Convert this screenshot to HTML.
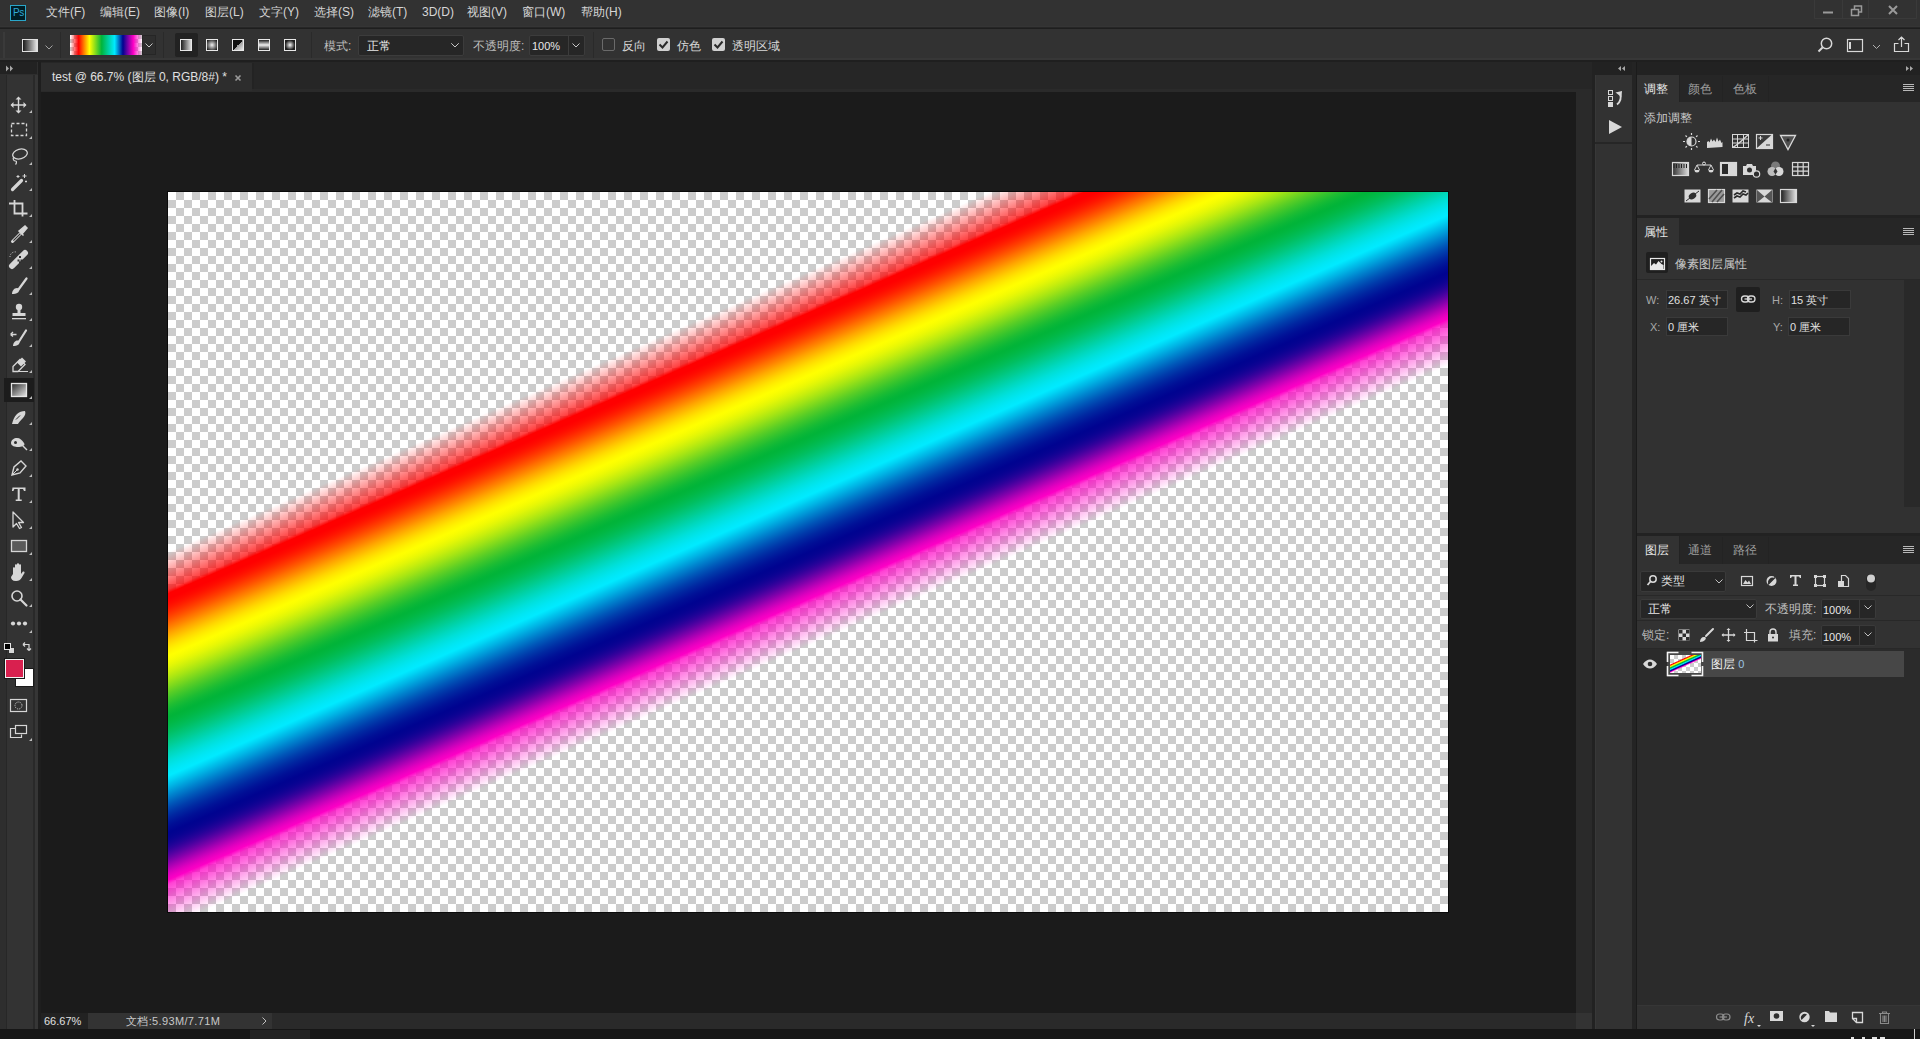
<!DOCTYPE html>
<html><head><meta charset="utf-8">
<style>
*{margin:0;padding:0;box-sizing:border-box}
html,body{width:1920px;height:1039px;overflow:hidden;background:#1b1b1b;font-family:"Liberation Sans",sans-serif;color:#d6d6d6}
.a{position:absolute}
.t{position:absolute;white-space:nowrap;font-size:12px;line-height:14px}
svg.i{position:absolute;overflow:visible}
.chk{position:absolute;width:13px;height:13px;border-radius:2px}
#thumbg,#cv{background:/*G*/linear-gradient(156.34deg,rgba(255,0,0,0.000) 327.91px,rgba(255,0,0,0.000) 329.74px,rgba(255,0,0,0.020) 330.66px,rgba(255,0,0,0.079) 333.40px,rgba(255,0,0,0.138) 336.15px,rgba(255,0,0,0.197) 338.90px,rgba(255,0,0,0.257) 341.65px,rgba(255,0,0,0.316) 344.39px,rgba(255,0,0,0.375) 347.14px,rgba(255,0,0,0.434) 349.89px,rgba(255,0,0,0.493) 352.64px,rgba(255,0,0,0.553) 355.39px,rgba(255,0,0,0.612) 358.13px,rgba(255,0,0,0.671) 360.88px,rgba(255,0,0,0.730) 363.63px,rgba(255,0,0,0.740) 364.09px,rgba(255,0,0,0.902) 366.38px,rgba(255,0,0,1.000) 367.75px,rgba(255,0,0,1.000) 369.13px,rgba(255,0,0,1.000) 371.87px,rgba(255,0,0,1.000) 372.79px,rgba(255,4,0,1.000) 374.62px,rgba(255,11,0,1.000) 377.37px,rgba(255,21,0,1.000) 380.12px,rgba(255,33,0,1.000) 382.86px,rgba(255,47,0,1.000) 385.61px,rgba(255,62,0,1.000) 388.36px,rgba(255,78,0,1.000) 391.11px,rgba(255,95,0,1.000) 393.86px,rgba(255,113,0,1.000) 396.60px,rgba(255,130,0,1.000) 399.35px,rgba(255,148,0,1.000) 402.10px,rgba(255,166,0,1.000) 404.85px,rgba(255,182,0,1.000) 407.59px,rgba(255,198,0,1.000) 410.34px,rgba(255,213,0,1.000) 413.09px,rgba(255,226,0,1.000) 415.84px,rgba(255,237,0,1.000) 418.59px,rgba(255,246,0,1.000) 421.33px,rgba(255,253,0,1.000) 424.08px,rgba(255,255,0,1.000) 425.00px,rgba(252,254,1,1.000) 426.83px,rgba(245,252,2,1.000) 429.58px,rgba(236,249,4,1.000) 432.33px,rgba(225,246,7,1.000) 435.07px,rgba(212,242,10,1.000) 437.82px,rgba(199,238,13,1.000) 440.57px,rgba(184,234,16,1.000) 443.32px,rgba(169,230,19,1.000) 446.06px,rgba(153,225,23,1.000) 448.81px,rgba(136,220,27,1.000) 451.56px,rgba(120,215,30,1.000) 454.31px,rgba(103,210,34,1.000) 457.06px,rgba(87,205,38,1.000) 459.80px,rgba(72,201,41,1.000) 462.55px,rgba(57,197,44,1.000) 465.30px,rgba(44,193,47,1.000) 468.05px,rgba(31,189,50,1.000) 470.79px,rgba(20,186,53,1.000) 473.54px,rgba(11,183,55,1.000) 476.29px,rgba(4,181,56,1.000) 479.04px,rgba(1,180,57,1.000) 480.87px,rgba(1,180,58,1.000) 481.79px,rgba(1,182,63,1.000) 484.53px,rgba(1,184,70,1.000) 487.28px,rgba(1,186,79,1.000) 490.03px,rgba(1,189,88,1.000) 492.78px,rgba(1,191,99,1.000) 495.53px,rgba(1,195,111,1.000) 498.27px,rgba(1,198,123,1.000) 501.02px,rgba(1,202,136,1.000) 503.77px,rgba(1,205,149,1.000) 506.52px,rgba(0,209,163,1.000) 509.26px,rgba(0,212,176,1.000) 512.01px,rgba(0,216,189,1.000) 514.76px,rgba(0,219,201,1.000) 517.51px,rgba(0,223,213,1.000) 520.26px,rgba(0,225,224,1.000) 523.00px,rgba(0,228,233,1.000) 525.75px,rgba(0,230,242,1.000) 528.50px,rgba(0,232,249,1.000) 531.25px,rgba(0,234,254,1.000) 533.99px,rgba(0,234,255,1.000) 534.91px,rgba(0,225,251,1.000) 536.74px,rgba(0,211,244,1.000) 539.49px,rgba(0,195,236,1.000) 542.24px,rgba(0,180,229,1.000) 544.99px,rgba(0,164,221,1.000) 547.73px,rgba(0,148,214,1.000) 550.48px,rgba(0,132,206,1.000) 553.23px,rgba(0,117,199,1.000) 555.98px,rgba(0,102,191,1.000) 558.73px,rgba(0,87,185,1.000) 561.47px,rgba(0,74,178,1.000) 564.22px,rgba(0,61,172,1.000) 566.97px,rgba(0,50,166,1.000) 569.72px,rgba(0,39,161,1.000) 572.46px,rgba(0,30,157,1.000) 575.21px,rgba(0,21,153,1.000) 577.96px,rgba(0,14,149,1.000) 580.71px,rgba(0,9,147,1.000) 583.46px,rgba(0,4,145,1.000) 586.20px,rgba(0,3,144,1.000) 587.12px,rgba(2,3,144,1.000) 588.95px,rgba(6,3,145,1.000) 591.70px,rgba(13,3,147,1.000) 594.45px,rgba(23,3,149,1.000) 597.19px,rgba(35,3,152,1.000) 599.94px,rgba(51,2,155,1.000) 602.69px,rgba(69,2,159,1.000) 605.44px,rgba(89,2,163,1.000) 608.19px,rgba(111,2,167,1.000) 610.93px,rgba(134,1,172,1.000) 613.68px,rgba(158,1,177,1.000) 616.43px,rgba(181,1,182,1.000) 619.18px,rgba(203,1,187,1.000) 621.93px,rgba(224,0,191,1.000) 624.67px,rgba(240,0,195,1.000) 627.42px,rgba(252,0,197,1.000) 630.17px,rgba(255,0,198,0.942) 631.08px,rgba(255,0,198,0.827) 632.92px,rgba(255,0,198,0.740) 634.29px,rgba(255,0,198,0.714) 635.66px,rgba(255,0,198,0.661) 638.41px,rgba(255,0,198,0.608) 641.16px,rgba(255,0,198,0.555) 643.91px,rgba(255,0,198,0.502) 646.66px,rgba(255,0,198,0.449) 649.40px,rgba(255,0,198,0.396) 652.15px,rgba(255,0,198,0.344) 654.90px,rgba(255,0,198,0.291) 657.65px,rgba(255,0,198,0.238) 660.39px,rgba(255,0,198,0.185) 663.14px,rgba(255,0,198,0.132) 665.89px,rgba(255,0,198,0.079) 668.64px,rgba(255,0,198,0.026) 671.39px,rgba(255,0,198,0.000) 672.76px,rgba(255,0,198,0.000) 674.13px)/*G*/,repeating-conic-gradient(#cccccc 0 25%,#ffffff 0 50%) 0 0/16px 16px}
#thumbg{background:/*T*/linear-gradient(156.34deg,rgba(255,0,0,0.000) 327.91px,rgba(255,0,0,0.000) 329.74px,rgba(255,0,0,0.020) 330.66px,rgba(255,0,0,0.079) 333.40px,rgba(255,0,0,0.138) 336.15px,rgba(255,0,0,0.197) 338.90px,rgba(255,0,0,0.257) 341.65px,rgba(255,0,0,0.316) 344.39px,rgba(255,0,0,0.375) 347.14px,rgba(255,0,0,0.434) 349.89px,rgba(255,0,0,0.493) 352.64px,rgba(255,0,0,0.553) 355.39px,rgba(255,0,0,0.612) 358.13px,rgba(255,0,0,0.671) 360.88px,rgba(255,0,0,0.730) 363.63px,rgba(255,0,0,0.740) 364.09px,rgba(255,0,0,0.902) 366.38px,rgba(255,0,0,1.000) 367.75px,rgba(255,0,0,1.000) 369.13px,rgba(255,0,0,1.000) 371.87px,rgba(255,0,0,1.000) 372.79px,rgba(255,4,0,1.000) 374.62px,rgba(255,11,0,1.000) 377.37px,rgba(255,21,0,1.000) 380.12px,rgba(255,33,0,1.000) 382.86px,rgba(255,47,0,1.000) 385.61px,rgba(255,62,0,1.000) 388.36px,rgba(255,78,0,1.000) 391.11px,rgba(255,95,0,1.000) 393.86px,rgba(255,113,0,1.000) 396.60px,rgba(255,130,0,1.000) 399.35px,rgba(255,148,0,1.000) 402.10px,rgba(255,166,0,1.000) 404.85px,rgba(255,182,0,1.000) 407.59px,rgba(255,198,0,1.000) 410.34px,rgba(255,213,0,1.000) 413.09px,rgba(255,226,0,1.000) 415.84px,rgba(255,237,0,1.000) 418.59px,rgba(255,246,0,1.000) 421.33px,rgba(255,253,0,1.000) 424.08px,rgba(255,255,0,1.000) 425.00px,rgba(252,254,1,1.000) 426.83px,rgba(245,252,2,1.000) 429.58px,rgba(236,249,4,1.000) 432.33px,rgba(225,246,7,1.000) 435.07px,rgba(212,242,10,1.000) 437.82px,rgba(199,238,13,1.000) 440.57px,rgba(184,234,16,1.000) 443.32px,rgba(169,230,19,1.000) 446.06px,rgba(153,225,23,1.000) 448.81px,rgba(136,220,27,1.000) 451.56px,rgba(120,215,30,1.000) 454.31px,rgba(103,210,34,1.000) 457.06px,rgba(87,205,38,1.000) 459.80px,rgba(72,201,41,1.000) 462.55px,rgba(57,197,44,1.000) 465.30px,rgba(44,193,47,1.000) 468.05px,rgba(31,189,50,1.000) 470.79px,rgba(20,186,53,1.000) 473.54px,rgba(11,183,55,1.000) 476.29px,rgba(4,181,56,1.000) 479.04px,rgba(1,180,57,1.000) 480.87px,rgba(1,180,58,1.000) 481.79px,rgba(1,182,63,1.000) 484.53px,rgba(1,184,70,1.000) 487.28px,rgba(1,186,79,1.000) 490.03px,rgba(1,189,88,1.000) 492.78px,rgba(1,191,99,1.000) 495.53px,rgba(1,195,111,1.000) 498.27px,rgba(1,198,123,1.000) 501.02px,rgba(1,202,136,1.000) 503.77px,rgba(1,205,149,1.000) 506.52px,rgba(0,209,163,1.000) 509.26px,rgba(0,212,176,1.000) 512.01px,rgba(0,216,189,1.000) 514.76px,rgba(0,219,201,1.000) 517.51px,rgba(0,223,213,1.000) 520.26px,rgba(0,225,224,1.000) 523.00px,rgba(0,228,233,1.000) 525.75px,rgba(0,230,242,1.000) 528.50px,rgba(0,232,249,1.000) 531.25px,rgba(0,234,254,1.000) 533.99px,rgba(0,234,255,1.000) 534.91px,rgba(0,225,251,1.000) 536.74px,rgba(0,211,244,1.000) 539.49px,rgba(0,195,236,1.000) 542.24px,rgba(0,180,229,1.000) 544.99px,rgba(0,164,221,1.000) 547.73px,rgba(0,148,214,1.000) 550.48px,rgba(0,132,206,1.000) 553.23px,rgba(0,117,199,1.000) 555.98px,rgba(0,102,191,1.000) 558.73px,rgba(0,87,185,1.000) 561.47px,rgba(0,74,178,1.000) 564.22px,rgba(0,61,172,1.000) 566.97px,rgba(0,50,166,1.000) 569.72px,rgba(0,39,161,1.000) 572.46px,rgba(0,30,157,1.000) 575.21px,rgba(0,21,153,1.000) 577.96px,rgba(0,14,149,1.000) 580.71px,rgba(0,9,147,1.000) 583.46px,rgba(0,4,145,1.000) 586.20px,rgba(0,3,144,1.000) 587.12px,rgba(2,3,144,1.000) 588.95px,rgba(6,3,145,1.000) 591.70px,rgba(13,3,147,1.000) 594.45px,rgba(23,3,149,1.000) 597.19px,rgba(35,3,152,1.000) 599.94px,rgba(51,2,155,1.000) 602.69px,rgba(69,2,159,1.000) 605.44px,rgba(89,2,163,1.000) 608.19px,rgba(111,2,167,1.000) 610.93px,rgba(134,1,172,1.000) 613.68px,rgba(158,1,177,1.000) 616.43px,rgba(181,1,182,1.000) 619.18px,rgba(203,1,187,1.000) 621.93px,rgba(224,0,191,1.000) 624.67px,rgba(240,0,195,1.000) 627.42px,rgba(252,0,197,1.000) 630.17px,rgba(255,0,198,0.942) 631.08px,rgba(255,0,198,0.827) 632.92px,rgba(255,0,198,0.740) 634.29px,rgba(255,0,198,0.714) 635.66px,rgba(255,0,198,0.661) 638.41px,rgba(255,0,198,0.608) 641.16px,rgba(255,0,198,0.555) 643.91px,rgba(255,0,198,0.502) 646.66px,rgba(255,0,198,0.449) 649.40px,rgba(255,0,198,0.396) 652.15px,rgba(255,0,198,0.344) 654.90px,rgba(255,0,198,0.291) 657.65px,rgba(255,0,198,0.238) 660.39px,rgba(255,0,198,0.185) 663.14px,rgba(255,0,198,0.132) 665.89px,rgba(255,0,198,0.079) 668.64px,rgba(255,0,198,0.026) 671.39px,rgba(255,0,198,0.000) 672.76px,rgba(255,0,198,0.000) 674.13px)/*T*/}
</style></head><body>
<!-- ============ MENU BAR ============ -->
<div class="a" style="left:0;top:0;width:1920px;height:28px;background:#323232"></div>
<div class="a" style="left:0;top:26px;width:1920px;height:1px;background:#353535"></div>
<div class="a" style="left:0;top:27px;width:1920px;height:1px;background:#262626"></div>
<div class="a" style="left:0;top:28px;width:1920px;height:1px;background:#1e1e1e"></div>
<div class="a" style="left:10px;top:5px;width:16px;height:16px;background:#001e26;border:1px solid #2aa6c9"></div>
<div class="t" style="left:13px;top:7px;font-size:10px;line-height:12px;color:#31a8d6;letter-spacing:-0.3px">Ps</div>
<div class="t" style="left:46px;top:5px">文件(F)</div>
<div class="t" style="left:100px;top:5px">编辑(E)</div>
<div class="t" style="left:154px;top:5px">图像(I)</div>
<div class="t" style="left:205px;top:5px">图层(L)</div>
<div class="t" style="left:259px;top:5px">文字(Y)</div>
<div class="t" style="left:314px;top:5px">选择(S)</div>
<div class="t" style="left:368px;top:5px">滤镜(T)</div>
<div class="t" style="left:422px;top:5px">3D(D)</div>
<div class="t" style="left:467px;top:5px">视图(V)</div>
<div class="t" style="left:522px;top:5px">窗口(W)</div>
<div class="t" style="left:581px;top:5px">帮助(H)</div>
<!-- window controls -->
<svg class="i" style="left:0;top:0" width="1920" height="28">
 <path d="M1814.5 0v18.5h102v-18.5 M1842.5 0v18 M1868.5 0v18" fill="none" stroke="#3a3a3a" stroke-width="1"/>
 <rect x="1823" y="11.5" width="10" height="2" fill="#9a9a9a"/>
 <path d="M1851.5 9.5h7v6h-7z M1854.5 9.5v-3.5h7v6h-3" fill="none" stroke="#9a9a9a" stroke-width="1.5"/>
 <path d="M1889 6l8 8M1897 6l-8 8" stroke="#9a9a9a" stroke-width="2"/>
</svg>

<!-- ============ OPTIONS BAR ============ -->
<div class="a" style="left:0;top:29px;width:1920px;height:33px;background:#323232"></div>
<div class="a" style="left:0;top:58px;width:1920px;height:2px;background:#373737"></div>
<div class="a" style="left:0;top:60px;width:1920px;height:2px;background:#1f1f1f"></div>
<div class="a" style="left:3px;top:32px;width:2px;height:26px;background:#3a3a3a"></div>
<!-- tool preset -->
<div class="a" style="left:22px;top:39px;width:16px;height:13px;border:1px solid #e0e0e0;background:linear-gradient(90deg,#1a1a1a,#e6e6e6)"></div>
<svg class="i" style="left:0;top:0" width="200" height="62">
 <path d="M45.5 45.5l3.5 3.5 3.5-3.5" fill="none" stroke="#a0a0a0" stroke-width="1"/>
 <path d="M147.5 42.5l3.5 3.5 3.5-3.5" fill="none" stroke="#c8c8c8" stroke-width="1"/>
</svg>
<div class="a" style="left:60px;top:32px;width:1px;height:26px;background:#2a2a2a"></div>
<!-- gradient preview -->
<div class="a" style="left:70px;top:35px;width:72px;height:20px;background:
linear-gradient(90deg,rgba(255,0,0,0) 0%,rgba(255,0,0,1) 12%,#ffff00 27%,#00b43c 44%,#00eaff 62%,#00038f 73.5%,rgba(255,0,198,1) 88%,rgba(255,0,198,0) 100%),
repeating-conic-gradient(#cccccc 0 25%,#ffffff 0 50%) 0 0/8px 8px"></div>
<div class="a" style="left:142px;top:35px;width:14px;height:20px;border:1px solid #262626;background:#2e2e2e"></div>
<svg class="i" style="left:0;top:0" width="200" height="62">
 <path d="M145.5 43.5l3.5 3.5 3.5-3.5" fill="none" stroke="#c8c8c8" stroke-width="1"/>
</svg>
<div class="a" style="left:163px;top:32px;width:1px;height:26px;background:#2a2a2a"></div>
<!-- gradient type buttons -->
<div class="a" style="left:175px;top:33px;width:23px;height:24px;background:#222222;border-radius:2px"></div>
<div class="a" style="left:180px;top:39px;width:12px;height:12px;border:1px solid #e8e8e8;background:linear-gradient(90deg,#1e1e1e,#dcdcdc)"></div>
<div class="a" style="left:206px;top:39px;width:12px;height:12px;border:1px solid #e8e8e8;background:radial-gradient(circle,#f0f0f0,#1e1e1e 90%)"></div>
<div class="a" style="left:232px;top:39px;width:12px;height:12px;border:1px solid #e8e8e8;background:linear-gradient(to bottom right,#111 50%,#9a9a9a 50%,#e8e8e8)"></div>
<div class="a" style="left:258px;top:39px;width:12px;height:12px;border:1px solid #e8e8e8;background:linear-gradient(#1e1e1e,#f0f0f0 50%,#1e1e1e)"></div>
<div class="a" style="left:284px;top:39px;width:12px;height:12px;border:1px solid #e8e8e8;background:radial-gradient(circle,#f8f8f8,#1e1e1e 70%)"></div>
<div class="a" style="left:311px;top:32px;width:1px;height:26px;background:#2a2a2a"></div>
<div class="t" style="left:324px;top:39px;color:#bdbdbd">模式:</div>
<div class="a" style="left:358px;top:35px;width:106px;height:21px;background:#262626;border:1px solid #3c3c3c;border-radius:2px"></div>
<div class="t" style="left:367px;top:39px;color:#e8e8e8">正常</div>
<svg class="i" style="left:0;top:0" width="900" height="62">
 <path d="M451.5 43.5l3.5 3.5 3.5-3.5" fill="none" stroke="#c8c8c8" stroke-width="1"/>
 <path d="M572.5 43.5l3.5 3.5 3.5-3.5" fill="none" stroke="#c8c8c8" stroke-width="1"/>
</svg>
<div class="t" style="left:473px;top:39px;color:#bdbdbd">不透明度:</div>
<div class="a" style="left:529px;top:35px;width:56px;height:21px;background:#262626;border:1px solid #3c3c3c;border-radius:2px"></div>
<div class="a" style="left:568px;top:36px;width:1px;height:19px;background:#3c3c3c"></div>
<div class="t" style="left:532px;top:39px;color:#e8e8e8;font-size:11px">100%</div>
<svg class="i" style="left:0;top:0" width="900" height="62"><path d="M572.5 43.5l3.5 3.5 3.5-3.5" fill="none" stroke="#c8c8c8" stroke-width="1"/><path d="M451.5 43.5l3.5 3.5 3.5-3.5" fill="none" stroke="#c8c8c8" stroke-width="1"/></svg>
<div class="a" style="left:593px;top:32px;width:1px;height:26px;background:#2a2a2a"></div>
<div class="chk" style="left:602px;top:38px;border:1px solid #6a6a6a"></div>
<div class="t" style="left:622px;top:39px;color:#d8d8d8">反向</div>
<div class="chk" style="left:657px;top:38px;background:#d0d0d0"></div>
<div class="t" style="left:677px;top:39px;color:#d8d8d8">仿色</div>
<div class="chk" style="left:712px;top:38px;background:#d0d0d0"></div>
<div class="t" style="left:732px;top:39px;color:#d8d8d8">透明区域</div>
<svg class="i" style="left:0;top:0" width="900" height="62">
 <path d="M659.5 44.5l3 3 5-6" fill="none" stroke="#2a2a2a" stroke-width="2"/>
 <path d="M714.5 44.5l3 3 5-6" fill="none" stroke="#2a2a2a" stroke-width="2"/>
</svg>
<!-- right options icons -->
<svg class="i" style="left:0;top:0" width="1920" height="62">
 <circle cx="1826.5" cy="43.5" r="5.2" fill="none" stroke="#d8d8d8" stroke-width="1.5"/>
 <path d="M1822.5 47.5l-4 4" stroke="#d8d8d8" stroke-width="2"/>
 <rect x="1847.5" y="39.5" width="15" height="12" fill="none" stroke="#d8d8d8" stroke-width="1.2"/>
 <rect x="1849" y="42" width="2" height="7" fill="#d8d8d8"/>
 <path d="M1873 45l3.5 3.5 3.5-3.5" fill="none" stroke="#b0b0b0" stroke-width="1"/>
 <path d="M1898.5 43.5h-4v8h14v-8h-4 M1901.5 47v-10 M1898.5 40l3-3 3 3" fill="none" stroke="#d8d8d8" stroke-width="1.2"/>
</svg>

<!-- ============ TOOLBAR (left) ============ -->
<div class="a" style="left:0;top:62px;width:39px;height:967px;background:#2e2e2e"></div>
<div class="a" style="left:0;top:62px;width:37px;height:12px;background:#222222"></div>
<svg class="i" style="left:0;top:0" width="40" height="80">
 <path d="M6 65.5l3 3-3 3z M10 65.5l3 3-3 3z" fill="#a8a8a8"/>
</svg>
<div class="a" style="left:6px;top:75px;width:1px;height:954px;background:#272727"></div>
<div class="a" style="left:7px;top:75px;width:27px;height:954px;background:#333333"></div>
<div class="a" style="left:33px;top:75px;width:2px;height:954px;background:#292929"></div>
<div class="a" style="left:35px;top:75px;width:3px;height:954px;background:#363636"></div>
<div class="a" style="left:38px;top:62px;width:3px;height:967px;background:#1e1e1e"></div>
<!-- tool icons -->
<div class="a" style="left:4px;top:378px;width:30px;height:24px;background:#1c1c1c"></div>
<svg class="i" style="left:0;top:0" width="40" height="760">
 <g fill="#d6d6d6" stroke="none">
  <!-- corner triangles -->
  <path d="M29 113h3v-3z M29 139h3v-3z M29 165h3v-3z M29 191h3v-3z M29 217h3v-3z M29 243h3v-3z M29 269h3v-3z M29 295h3v-3z M29 321h3v-3z M29 347h3v-3z M29 373h3v-3z M29 399h3v-3z M29 425h3v-3z M29 451h3v-3z M29 477h3v-3z M29 503h3v-3z M29 529h3v-3z M29 555h3v-3z M29 581h3v-3z M29 607h3v-3z M29 633h3v-3z M29 741h3v-3z" fill="#bdbdbd"/>
 </g>
 <g fill="none" stroke="#d6d6d6" stroke-width="1.4">
  <!-- move -->
  <path d="M18.5 98v14 M11.5 105h14"/>
 </g>
 <g fill="#d6d6d6">
  <path d="M18.5 96.5l-3 3h6z M18.5 113.5l-3-3h6z M10.5 105l3-3v6z M26.5 105l-3-3v6z"/>
 </g>
 <!-- marquee -->
 <rect x="11.5" y="123.5" width="15" height="12" fill="none" stroke="#d6d6d6" stroke-width="1.3" stroke-dasharray="3 2"/>
 <!-- lasso -->
 <ellipse cx="20" cy="154" rx="7.5" ry="4.8" transform="rotate(-15 20 154)" fill="none" stroke="#d6d6d6" stroke-width="1.3"/>
 <path d="M14 157c-2 2 0 4 1.5 4s1 2.5 0 3.5" fill="none" stroke="#d6d6d6" stroke-width="1.2"/>
 <!-- magic wand -->
 <path d="M12.5 189.5l9-9" stroke="#d6d6d6" stroke-width="3.2" stroke-linecap="round"/>
 <path d="M18 175v3M16.5 176.5h3 M24.5 174v4M22.5 176h4 M26 180.5v2M25 181.5h2" stroke="#d6d6d6" stroke-width="1"/>
 <!-- crop -->
 <path d="M14.5 200v13.5h13 M9 203.5h13.5v13" fill="none" stroke="#d6d6d6" stroke-width="1.8"/>
 <!-- eyedropper -->
 <path d="M12.5 241.5l8-8" stroke="#d6d6d6" stroke-width="3" stroke-linecap="round" fill="none"/>
 <path d="M13.4 240.6l7-7" stroke="#2e2e2e" stroke-width="1.2"/>
 <path d="M19 231l6-5 2 2-5 6z M18.5 230.5l5 5" fill="#d6d6d6" stroke="#d6d6d6" stroke-width="1.5"/>
 <!-- healing bandage -->
 <path d="M12 266l13-13" stroke="#d6d6d6" stroke-width="6" stroke-linecap="round"/>
 <path d="M17.5 259.5h2v2h-2z M20.5 259.5h2v2h-2z M19 258h2v-2h-2z M19 263h2v-2h-2z" fill="#2e2e2e"/>
 <path d="M10 257a5 5 0 0 1 6-5" fill="none" stroke="#d6d6d6" stroke-width="1" stroke-dasharray="1 1.5"/>
 <!-- brush -->
 <path d="M18.5 289.5l8-11" stroke="#d6d6d6" stroke-width="2.2" stroke-linecap="round"/>
 <path d="M12 294c0-3 2-6 5-6s2.5 3 1 4.5-4 1.5-6 1.5z" fill="#d6d6d6"/>
 <!-- stamp -->
 <circle cx="19" cy="307" r="3.2" fill="#d6d6d6"/>
 <path d="M17.5 309h3v4h5v3h-13v-3h5z" fill="#d6d6d6"/>
 <rect x="12" y="318" width="14" height="1.3" fill="#d6d6d6"/>
 <!-- history brush -->
 <path d="M19 341.5l7-11" stroke="#d6d6d6" stroke-width="2.2" stroke-linecap="round"/>
 <path d="M13 346c0-3 2-5.5 4.5-5.5s2.5 2.5 1 4-3.5 1.5-5.5 1.5z" fill="#d6d6d6"/>
 <path d="M10.5 334.5h6 M10.5 334.5l2.5-2.5M10.5 334.5l2.5 2" stroke="#d6d6d6" stroke-width="1.3" fill="none"/>
 <!-- eraser -->
 <path d="M13 366.5l7-7 5 5-7 7h-5z" fill="none" stroke="#d6d6d6" stroke-width="1.3"/>
 <path d="M17 362.5l5-5 4 4-5 5z" fill="#d6d6d6"/>
 <path d="M18 371.5h10" stroke="#d6d6d6" stroke-width="1"/>
 <!-- gradient (selected) -->
 <rect x="11.5" y="383.5" width="15" height="13" fill="url(#tg)" stroke="#e6e6e6" stroke-width="1.3"/>
 <defs><linearGradient id="tg" x1="0" y1="0" x2="1" y2="1"><stop offset="0" stop-color="#2a2a2a"/><stop offset="1" stop-color="#e8e8e8"/></linearGradient></defs>
 <!-- smudge/blur finger -->
 <path d="M12 424c1-4 2-7 5-10 2-2 5-3 8-3 1 2 0 5-2 7-3 3-4 4-5 6z" fill="#d6d6d6"/>
 <path d="M16 419.5l4-4" stroke="#2e2e2e" stroke-width="1"/>
 <!-- dodge -->
 <path d="M11 443c0-3 3-5 6-5s5 2 7 5-3 4-6 4-7-1-7-4z" fill="#d6d6d6"/>
 <circle cx="15.5" cy="442.5" r="1.5" fill="#2e2e2e"/>
 <path d="M23 446l4 4" stroke="#d6d6d6" stroke-width="1.5"/>
 <!-- pen -->
 <path d="M12 475l2-8 7-6 5 5-6 7z" fill="none" stroke="#d6d6d6" stroke-width="1.4"/>
 <circle cx="17.5" cy="469.5" r="1.2" fill="#d6d6d6"/>
 <path d="M12 475l5-5" stroke="#d6d6d6" stroke-width="1"/>
 <!-- type T -->
 <path d="M12.5 487.5h13v3.5h-1.5l-1-2h-3.3v10.5h2v1.5h-6v-1.5h2v-10.5h-3.3l-1 2h-1.5z" fill="#d6d6d6"/>
 <!-- path selection -->
 <path d="M13 512v15l3.5-3.5 3 5 2-1-3-5h5z" fill="none" stroke="#d6d6d6" stroke-width="1.3" stroke-linejoin="round"/>
 <!-- rectangle -->
 <rect x="11.5" y="540.5" width="15" height="11" fill="#5a5a5a" stroke="#d6d6d6" stroke-width="1.3"/>
 <!-- hand -->
 <path d="M13 574v-6c0-1 2-1 2 0v4-7c0-1 2-1 2 0v7-8c0-1 2-1 2 0v8-7c0-1 2-1 2 0v9l1.5-2c1-1 2.5 0 2 1l-3 5c-1 2-3 3-5 3h-1c-3 0-4.5-2-4.5-4z" fill="#d6d6d6"/>
 <!-- zoom -->
 <circle cx="17" cy="596" r="5" fill="none" stroke="#d6d6d6" stroke-width="1.6"/>
 <path d="M20.5 599.5l6 6" stroke="#d6d6d6" stroke-width="2.2" stroke-linecap="round"/>
 <!-- dots -->
 <circle cx="13" cy="623.5" r="2.1" fill="#d6d6d6"/><circle cx="19" cy="623.5" r="2.1" fill="#d6d6d6"/><circle cx="25" cy="623.5" r="2.1" fill="#d6d6d6"/>
 <!-- default colors -->
 <rect x="8.5" y="647.5" width="6" height="6" fill="#d6d6d6" stroke="#2e2e2e" stroke-width="1"/>
 <rect x="4.5" y="643.5" width="6" height="6" fill="#000" stroke="#e6e6e6" stroke-width="1"/>
 <!-- swap -->
 <path d="M23 644.5h6v6 M23 644.5l2-2 M23 644.5l2 2 M29 650.5l-2-2 M29 650.5l2-2" fill="none" stroke="#d6d6d6" stroke-width="1.2"/>
 <!-- quick mask -->
 <rect x="10.5" y="699.5" width="16" height="12" fill="none" stroke="#d6d6d6" stroke-width="1.2"/>
 <circle cx="18.5" cy="705.5" r="3.5" fill="none" stroke="#d6d6d6" stroke-width="1" stroke-dasharray="1 1"/>
 <!-- screen mode -->
 <rect x="15.5" y="725.5" width="11" height="8" fill="#2e2e2e" stroke="#d6d6d6" stroke-width="1.2"/>
 <path d="M15 728.5h-4.5v9h11v-3" fill="none" stroke="#d6d6d6" stroke-width="1.2"/>
</svg>
<div class="a" style="left:15px;top:668px;width:19px;height:19px;background:#ffffff;border:1px solid #1a1a1a"></div>
<div class="a" style="left:5px;top:659px;width:19px;height:19px;background:#d9204f;border:1px solid #f2f2f2;outline:1px solid #1a1a1a"></div>


<!-- ============ DOC TAB STRIP ============ -->
<div class="a" style="left:41px;top:62px;width:1551px;height:30px;background:#262626"></div>
<div class="a" style="left:41px;top:89px;width:1551px;height:3px;background:#2a2a2a"></div><div class="a" style="left:252px;top:63px;width:2px;height:26px;background:#232323"></div>
<div class="a" style="left:41px;top:63px;width:211px;height:28px;background:#2d2d2d"></div>
<div class="t" style="left:52px;top:70px;color:#e0e0e0">test @ 66.7% (图层 0, RGB/8#) *</div>
<svg class="i" style="left:0;top:0" width="300" height="92">
 <path d="M235.5 75.5l5 5M240.5 75.5l-5 5" stroke="#9a9a9a" stroke-width="1.6"/>
</svg>

<!-- ============ CANVAS AREA ============ -->
<div class="a" style="left:41px;top:92px;width:1535px;height:921px;background:#1b1b1b"></div>
<div class="a" style="left:167px;top:191px;width:1282px;height:722px;background:#0a0a0a"></div>
<div class="a" id="cv" style="left:168px;top:192px;width:1280px;height:720px"></div>

<!-- vertical scrollbar col -->
<div class="a" style="left:1576px;top:92px;width:16px;height:937px;background:#2a2a2a"></div>
<!-- status bar -->
<div class="a" style="left:41px;top:1013px;width:1551px;height:16px;background:#2a2a2a"></div>
<div class="a" style="left:41px;top:1013px;width:47px;height:16px;background:#222222"></div>
<div class="a" style="left:88px;top:1013px;width:184px;height:16px;background:#333333"></div>
<div class="a" style="left:1576px;top:1013px;width:16px;height:16px;background:#333333"></div>
<div class="t" style="left:44px;top:1014px;font-size:11px;color:#e0e0e0">66.67%</div>
<div class="t" style="left:126px;top:1014px;font-size:11px;color:#c8c8c8;letter-spacing:0.35px">文档:5.93M/7.71M</div>
<svg class="i" style="left:0;top:0" width="300" height="1039">
 <path d="M262.5 1017.5l3.5 3.5-3.5 3.5" fill="none" stroke="#c0c0c0" stroke-width="1"/>
</svg>

<!-- ============ RIGHT COLLAPSED COLUMN ============ -->
<div class="a" style="left:1592px;top:62px;width:3px;height:967px;background:#222222"></div>
<div class="a" style="left:1595px;top:62px;width:37px;height:967px;background:#323232;border-left:1px solid #383838"></div>
<div class="a" style="left:1595px;top:62px;width:37px;height:13px;background:#222222"></div>
<div class="a" style="left:1595px;top:142px;width:37px;height:2px;background:#262626"></div>
<div class="a" style="left:1632px;top:62px;width:4px;height:967px;background:#242424"></div>
<!-- ============ RIGHT PANELS ============ -->
<div class="a" style="left:1637px;top:62px;width:283px;height:967px;background:#2b2b2b"></div>
<div class="a" style="left:1637px;top:62px;width:283px;height:13px;background:#222222"></div>
<svg class="i" style="left:0;top:0" width="1920" height="80">
 <path d="M1906 66l3 2.5-3 2.5z M1910 66l3 2.5-3 2.5z" fill="#a8a8a8"/>
 <path d="M1621 66l-3 2.5 3 2.5z M1625 66l-3 2.5 3 2.5z" fill="#a8a8a8"/>
</svg>
<!-- Adjustments panel -->
<div class="a" style="left:1637px;top:75px;width:283px;height:27px;background:#262626"></div>
<div class="a" style="left:1637px;top:75px;width:42px;height:27px;background:#323232"></div>
<div class="a" style="left:1679px;top:75px;width:1px;height:27px;background:#232323"></div>
<div class="a" style="left:1722px;top:76px;width:1px;height:26px;background:#232323"></div>
<div class="a" style="left:1768px;top:76px;width:1px;height:26px;background:#232323"></div>
<div class="t" style="left:1644px;top:82px;color:#e6e6e6">调整</div>
<div class="t" style="left:1688px;top:82px;color:#9c9c9c">颜色</div>
<div class="t" style="left:1733px;top:82px;color:#9c9c9c">色板</div>
<div class="a" style="left:1637px;top:102px;width:283px;height:113px;background:#323232"></div>
<div class="t" style="left:1644px;top:111px;color:#c8c8c8">添加调整</div>
<div class="a" style="left:1637px;top:215px;width:283px;height:3px;background:#222222"></div>
<!-- Properties panel -->
<div class="a" style="left:1637px;top:218px;width:283px;height:27px;background:#262626"></div>
<div class="a" style="left:1637px;top:218px;width:42px;height:27px;background:#323232"></div>
<div class="t" style="left:1644px;top:225px;color:#e6e6e6">属性</div>
<div class="a" style="left:1637px;top:245px;width:283px;height:35px;background:#323232;border-bottom:1px solid #282828"></div>
<div class="a" style="left:1646px;top:252px;width:22px;height:21px;background:#1f1f1f;border-radius:2px"></div>
<svg class="i" style="left:0;top:0" width="1920" height="300">
 <rect x="1650.5" y="258.5" width="14" height="11" fill="none" stroke="#e8e8e8" stroke-width="1.2"/>
 <path d="M1651 269v-3l3-3 2 1.5 2.5-3.5 3 3 2 1v4z" fill="#e8e8e8"/>
 <circle cx="1661.5" cy="261.5" r="1" fill="#e8e8e8"/>
</svg>
<div class="t" style="left:1675px;top:257px;color:#c8c8c8">像素图层属性</div>
<div class="a" style="left:1637px;top:280px;width:283px;height:253px;background:#313131"></div>
<div class="a" style="left:1904px;top:280px;width:16px;height:227px;background:#292929"></div>
<div class="t" style="left:1646px;top:293px;color:#a8a8a8;font-size:11px">W:</div>
<div class="a" style="left:1666px;top:290px;width:62px;height:19px;background:#262626;border:1px solid #3a3a3a"></div>
<div class="t" style="left:1668px;top:293px;color:#e0e0e0;font-size:11px">26.67 英寸</div>
<div class="a" style="left:1736px;top:287px;width:24px;height:25px;background:#1f1f1f;border-radius:2px"></div>
<svg class="i" style="left:0;top:0" width="1920" height="340">
 <rect x="1741.5" y="296" width="7.5" height="6" rx="3" fill="none" stroke="#d8d8d8" stroke-width="1.3"/><rect x="1747.5" y="296" width="7.5" height="6" rx="3" fill="none" stroke="#d8d8d8" stroke-width="1.3"/><path d="M1744.5 299h7.5" stroke="#d8d8d8" stroke-width="1.3"/>
</svg>
<div class="t" style="left:1772px;top:293px;color:#a8a8a8;font-size:11px">H:</div>
<div class="a" style="left:1789px;top:290px;width:62px;height:19px;background:#262626;border:1px solid #3a3a3a"></div>
<div class="t" style="left:1791px;top:293px;color:#e0e0e0;font-size:11px">15 英寸</div>
<div class="t" style="left:1650px;top:320px;color:#a8a8a8;font-size:11px">X:</div>
<div class="a" style="left:1666px;top:317px;width:62px;height:19px;background:#262626;border:1px solid #3a3a3a"></div>
<div class="t" style="left:1668px;top:320px;color:#e0e0e0;font-size:11px">0 厘米</div>
<div class="t" style="left:1773px;top:320px;color:#a8a8a8;font-size:11px">Y:</div>
<div class="a" style="left:1788px;top:317px;width:62px;height:19px;background:#262626;border:1px solid #3a3a3a"></div>
<div class="t" style="left:1790px;top:320px;color:#e0e0e0;font-size:11px">0 厘米</div>
<div class="a" style="left:1637px;top:533px;width:283px;height:3px;background:#222222"></div>
<!-- Layers panel -->
<div class="a" style="left:1637px;top:536px;width:283px;height:28px;background:#262626"></div>
<div class="a" style="left:1637px;top:536px;width:42px;height:28px;background:#323232"></div>
<div class="a" style="left:1679px;top:536px;width:1px;height:28px;background:#232323"></div>
<div class="a" style="left:1722px;top:537px;width:1px;height:27px;background:#232323"></div>
<div class="a" style="left:1768px;top:537px;width:1px;height:27px;background:#232323"></div>
<div class="t" style="left:1645px;top:543px;color:#e6e6e6">图层</div>
<div class="t" style="left:1688px;top:543px;color:#9c9c9c">通道</div>
<div class="t" style="left:1733px;top:543px;color:#9c9c9c">路径</div>
<div class="a" style="left:1637px;top:564px;width:283px;height:441px;background:#2b2b2b"></div>
<div class="a" style="left:1637px;top:564px;width:283px;height:32px;background:#323232;border-bottom:1px solid #282828"></div>
<div class="a" style="left:1640px;top:571px;width:86px;height:21px;background:#262626;border:1px solid #3a3a3a;border-radius:2px"></div>
<div class="t" style="left:1661px;top:574px;color:#e0e0e0">类型</div>
<div class="a" style="left:1637px;top:596px;width:283px;height:25px;background:#323232;border-bottom:1px solid #282828"></div>
<div class="a" style="left:1640px;top:599px;width:117px;height:20px;background:#262626;border:1px solid #3a3a3a;border-radius:2px"></div>
<div class="t" style="left:1648px;top:602px;color:#e8e8e8">正常</div>
<div class="t" style="left:1765px;top:602px;color:#c0c0c0">不透明度:</div>
<div class="a" style="left:1821px;top:599px;width:55px;height:20px;background:#262626;border:1px solid #3a3a3a;border-radius:2px"></div>
<div class="a" style="left:1859px;top:600px;width:1px;height:18px;background:#3a3a3a"></div>
<div class="t" style="left:1823px;top:603px;color:#e8e8e8;font-size:11px">100%</div>
<div class="a" style="left:1637px;top:621px;width:283px;height:28px;background:#323232;border-bottom:1px solid #282828"></div>
<div class="t" style="left:1642px;top:628px;color:#b8b8b8">锁定:</div>
<div class="t" style="left:1789px;top:628px;color:#b8b8b8">填充:</div>
<div class="a" style="left:1821px;top:625px;width:55px;height:21px;background:#262626;border:1px solid #3a3a3a;border-radius:2px"></div>
<div class="a" style="left:1859px;top:626px;width:1px;height:19px;background:#3a3a3a"></div>
<div class="t" style="left:1823px;top:630px;color:#e8e8e8;font-size:11px">100%</div>
<!-- layer row -->
<div class="a" style="left:1667px;top:651px;width:237px;height:26px;background:#474747"></div>
<div class="a" id="thumb" style="left:1670px;top:655px;width:31px;height:18px;overflow:hidden;background:repeating-conic-gradient(#cccccc 0 25%,#ffffff 0 50%) 0 0/8px 8px"><div id="thumbg" style="position:absolute;left:0;top:0;width:1280px;height:720px;transform-origin:0 0;transform:scale(0.02422,0.025)"></div></div>
<div class="t" style="left:1711px;top:657px;color:#f0f0f0">图层 <span style="color:#9cc4e4;font-size:11px">0</span></div>
<!-- layers bottom bar -->
<div class="a" style="left:1637px;top:1005px;width:283px;height:24px;background:#313131;border-top:1px solid #363636"></div>

<!-- right icons -->
<svg class="i" style="left:0;top:0" width="1920" height="1039">
 <!-- panel menu icons -->
 <g stroke="#b8b8b8" stroke-width="1">
  <path d="M1903 84.5h11M1903 86.5h11M1903 88.5h11M1903 90.5h11"/>
  <path d="M1903 228.5h11M1903 230.5h11M1903 232.5h11M1903 234.5h11"/>
  <path d="M1903 546.5h11M1903 548.5h11M1903 550.5h11M1903 552.5h11"/>
 </g>
 <!-- collapsed column: history + play -->
 <g fill="none" stroke="#d8d8d8" stroke-width="1">
  <rect x="1608.5" y="90.5" width="4" height="4"/>
  <rect x="1608.5" y="96.5" width="4" height="4"/>
  <path d="M1617 104.5c3-2.5 4.5-6.5 3-10.5" stroke-width="1.8"/>
 </g>
 <rect x="1608" y="102" width="5" height="5" fill="#d8d8d8"/>
 <path d="M1609 120v14l13-7z" fill="#d8d8d8"/>
 <path d="M1615.5 92.5l6.5-1.5-0.5 6z" fill="#d8d8d8"/>
 <!-- adjustments row1 -->
 <g fill="none" stroke="#d8d8d8" stroke-width="1.2">
  <circle cx="1691.5" cy="141.5" r="4.5"/>
  <path d="M1691.5 133v2M1691.5 148v2M1683 141.5h2M1698 141.5h2M1685.5 135.5l1.4 1.4M1696.1 146.1l1.4 1.4M1697.5 135.5l-1.4 1.4M1686.9 146.1l-1.4 1.4"/>
 </g>
 <path d="M1691.5 137a4.5 4.5 0 0 0 0 9z" fill="#d8d8d8"/>
 <path d="M1707 148v-6l1.5-1 1 1.5 1.5-4 1.5 3 1.5-2 1.5 2.5 1.5-4.5 1.5 4 1.5-2 1.5 3.5 1-1v5z" fill="#d8d8d8"/>
 <g fill="none" stroke="#d8d8d8" stroke-width="1">
  <rect x="1732.5" y="134.5" width="16" height="13"/>
  <path d="M1737.5 134.5v13M1743.5 134.5v13M1732.5 139h16M1732.5 143h16"/>
  <path d="M1733 147c5-2 9-7 15-12" stroke-width="1.3"/>
 </g>
 <rect x="1756.5" y="134.5" width="16" height="14" fill="#3a3a3a" stroke="#d8d8d8" stroke-width="1.2"/>
 <path d="M1757 148l15-13.5v14z" fill="#d8d8d8"/>
 <path d="M1758.5 138h4M1760.5 136v4" stroke="#d8d8d8" stroke-width="1"/>
 <path d="M1766 145h4" stroke="#2e2e2e" stroke-width="1"/>
 <path d="M1780.5 135.5h15l-7.5 14z" fill="#505050" stroke="#d8d8d8" stroke-width="1.3"/>
 <circle cx="1788" cy="140" r="1.5" fill="#222"/>
 <!-- row2 -->
 <rect x="1672.5" y="162.5" width="16" height="13" fill="url(#hg)" stroke="#d8d8d8" stroke-width="1.2"/>
 <defs>
  <linearGradient id="hg" x1="0" y1="0" x2="1" y2="0"><stop offset="0" stop-color="#333"/><stop offset="1" stop-color="#ddd"/></linearGradient>
  <linearGradient id="gm" x1="0" y1="0" x2="1" y2="0"><stop offset="0" stop-color="#1a1a1a"/><stop offset="1" stop-color="#e6e6e6"/></linearGradient>
 </defs>
 <path d="M1674 164v4M1676.5 164v4M1679 164v4M1681.5 164v4M1684 164v4M1686.5 164v4" stroke="#222" stroke-width="1"/>
 <g fill="none" stroke="#d8d8d8" stroke-width="1">
  <path d="M1697 165h14 M1704 163v-1 M1697 165l-2.5 5 M1697 165l2.5 5 M1711 165l-2.5 5 M1711 165l2.5 5"/>
  <circle cx="1704" cy="163.5" r="1.5"/>
 </g>
 <path d="M1694.5 170h5a2.5 2.5 0 0 1-5 0z M1708.5 170h5a2.5 2.5 0 0 1-5 0z" fill="#d8d8d8"/>
 <rect x="1720.5" y="162.5" width="16" height="13" fill="#d8d8d8" stroke="#d8d8d8" stroke-width="1.2"/>
 <rect x="1722" y="164" width="6" height="10" fill="#2a2a2a"/>
 <path d="M1743 166h3l1-2h5l1 2h3v9h-13z" fill="#d8d8d8"/>
 <circle cx="1749.5" cy="170" r="2.5" fill="#2e2e2e"/>
 <circle cx="1756.5" cy="174" r="3.2" fill="#2e2e2e" stroke="#d8d8d8" stroke-width="1.2"/>
 <circle cx="1775.5" cy="166" r="4.5" fill="#7a7a7a"/>
 <circle cx="1772" cy="171.5" r="4.5" fill="#bdbdbd"/>
 <circle cx="1779" cy="171.5" r="4.5" fill="#d8d8d8"/>
 <path d="M1775.5 168l-2 3.5 2 3 2-3z" fill="#333"/>
 <g fill="none" stroke="#d8d8d8" stroke-width="1.2">
  <rect x="1792.5" y="162.5" width="16" height="13"/>
  <path d="M1792.5 166.8h16M1792.5 171.2h16M1797.8 162.5v13M1803.2 162.5v13"/>
 </g>
 <!-- row3 -->
 <rect x="1684.5" y="189.5" width="16" height="13" fill="#d8d8d8"/>
 <path d="M1686 201l13-10" stroke="#2e2e2e" stroke-width="1"/>
 <ellipse cx="1692.5" cy="196" rx="4" ry="3" fill="#2e2e2e" transform="rotate(-35 1692.5 196)"/>
 <rect x="1708.5" y="189.5" width="16" height="13" fill="#9a9a9a" stroke="#d8d8d8" stroke-width="1.2"/>
 <path d="M1709 199l8-9M1712 202l10-12M1717 202l7-8" stroke="#505050" stroke-width="1.6"/>
 <rect x="1732.5" y="189.5" width="16" height="13" fill="#d8d8d8"/>
 <path d="M1734 198l3-2 3 1 3-3 3 1 2-2 M1734 195l3-2 3 1 3-3 3 1" stroke="#2a2a2a" stroke-width="1.6" fill="none"/>
 <rect x="1756.5" y="189.5" width="16" height="13" fill="#d8d8d8"/>
 <path d="M1757 190l7.5 6.5-7.5 6z M1772 190l-7.5 6.5 7.5 6z" fill="#555"/>
 <rect x="1780.5" y="189.5" width="16" height="13" fill="url(#gm)" stroke="#d8d8d8" stroke-width="1.2"/>
 <!-- layers filter row -->
 <circle cx="1653" cy="579" r="3.2" fill="none" stroke="#d8d8d8" stroke-width="1.5"/>
 <path d="M1650.5 581.5l-3 3.5" stroke="#d8d8d8" stroke-width="1.8"/>
 <path d="M1715.5 579.5l3.5 3.5 3.5-3.5" fill="none" stroke="#c0c0c0" stroke-width="1"/>
 <path d="M1746.5 604.5l3.5 3.5 3.5-3.5" fill="none" stroke="#c0c0c0" stroke-width="1"/>
 <path d="M1864.5 605.5l3.5 3.5 3.5-3.5" fill="none" stroke="#c0c0c0" stroke-width="1"/>
 <path d="M1864.5 632.5l3.5 3.5 3.5-3.5" fill="none" stroke="#c0c0c0" stroke-width="1"/>
 <rect x="1741.5" y="576.5" width="11" height="9" fill="none" stroke="#d8d8d8" stroke-width="1.2"/>
 <path d="M1743 584l2.5-4 2 2.5 1.5-2 2 3.5z" fill="#d8d8d8"/>
 <circle cx="1771.5" cy="581" r="5" fill="#d8d8d8"/>
 <path d="M1768 584.5l7-7" stroke="#2e2e2e" stroke-width="1.2"/>
 <path d="M1768.5 584a4.5 4.5 0 0 1 6-6z" fill="#2e2e2e"/>
 <path d="M1790 575h11v3h-1l-1-1.5h-2.5v8h1.5v1.5h-5v-1.5h1.5v-8h-2.5l-1 1.5h-1z" fill="#d8d8d8"/>
 <g fill="none" stroke="#d8d8d8" stroke-width="1.2"><rect x="1815.5" y="576.5" width="9" height="9"/></g>
 <path d="M1814 575h3v3h-3zM1823 575h3v3h-3zM1814 584h3v3h-3zM1823 584h3v3h-3z" fill="#d8d8d8"/>
 <path d="M1841.5 575.5h4l3 3v8h-7z" fill="none" stroke="#d8d8d8" stroke-width="1.2"/>
 <rect x="1838" y="581" width="6" height="6" fill="#d8d8d8"/>
 <rect x="1866" y="574" width="10" height="17" rx="5" fill="#262626"/>
 <circle cx="1871" cy="578.5" r="4" fill="#d0d0d0"/>
 <!-- lock icons -->
 <rect x="1678.5" y="629.5" width="11" height="11" fill="#d8d8d8"/>
 <path d="M1679 630h3.5v3.5h-3.5zM1686 630h3.5v3.5h-3.5zM1682.5 633.5h3.5v3.5h-3.5zM1679 637h3.5v3.5h-3.5zM1686 637h3.5v3.5h-3.5z" fill="#2e2e2e"/>
 <path d="M1706 636l7-7" stroke="#d8d8d8" stroke-width="2" stroke-linecap="round"/>
 <path d="M1700 642c0-3 1.5-5 4-5s2 2 1 3-3 2-5 2z" fill="#d8d8d8"/>
 <path d="M1728.5 629v12M1722.5 635h12" stroke="#d8d8d8" stroke-width="1.3"/>
 <path d="M1728.5 628l-2 2h4z M1728.5 642l-2-2h4z M1721.5 635l2-2v4z M1735.5 635l-2-2v4z" fill="#d8d8d8"/>
 <path d="M1746.5 629v11.5h11 M1744 632.5h10.5v10" fill="none" stroke="#d8d8d8" stroke-width="1.2"/>
 <path d="M1770 634v-2a3 3 0 0 1 6 0v2" fill="none" stroke="#d8d8d8" stroke-width="1.4"/>
 <rect x="1768" y="634" width="10" height="7.5" fill="#d8d8d8"/>
 <circle cx="1773" cy="637.5" r="1" fill="#2e2e2e"/>
 <!-- eye -->
 <path d="M1643 664c2-3 4.5-4.5 7-4.5s5 1.5 7 4.5c-2 3-4.5 4.5-7 4.5s-5-1.5-7-4.5z" fill="#d8d8d8"/>
 <circle cx="1650" cy="664" r="2.3" fill="#2c2c2c"/>
 <!-- thumb brackets -->
 <path d="M1667.5 662v-9.5h11 M1691.5 652.5h11v9.5 M1702.5 666v9.5h-11 M1678.5 675.5h-11v-9.5" fill="none" stroke="#f4f4f4" stroke-width="1.6"/>
 <!-- bottom bar icons -->
 <g fill="none" stroke="#8c8c8c" stroke-width="1.2">
  <rect x="1716.5" y="1014" width="7.5" height="6" rx="3"/><rect x="1722.5" y="1014" width="7.5" height="6" rx="3"/><path d="M1719.5 1017h7.5"/>
 </g>
 <text x="1744" y="1023" font-family="Liberation Serif" font-style="italic" font-size="14" fill="#d8d8d8">fx</text>
 <path d="M1757 1025h4l-2 2z M1811 1025h4l-2 2z" fill="#d8d8d8"/>
 <rect x="1770" y="1011" width="13" height="10" fill="#d8d8d8"/>
 <circle cx="1776.5" cy="1016" r="2.8" fill="#2e2e2e"/>
 <circle cx="1804.5" cy="1017" r="5.2" fill="#d8d8d8"/>
 <path d="M1801.5 1020a4 4 0 0 1 5.5-5.5z" fill="#2e2e2e"/>
 <path d="M1825 1011h4l1 1.5h7v9.5h-12z" fill="#d8d8d8"/>
 <path d="M1852.5 1012.5h10v10h-6l-4-4z" fill="none" stroke="#d8d8d8" stroke-width="1.3"/>
 <path d="M1852.5 1018.5h4v4" fill="none" stroke="#d8d8d8" stroke-width="1.3"/>
 <g fill="none" stroke="#8a8a8a" stroke-width="1.1">
  <path d="M1879 1013.5h11 M1882.5 1013.5v-1.5h4v1.5 M1880.5 1014v9.5h8v-9.5 M1883 1015.5v6.5M1884.5 1015.5v6.5M1886 1015.5v6.5"/>
 </g>
 <!-- taskbar bits -->
 <rect x="1914" y="1029" width="1" height="10" fill="#d8d8d8"/>
</svg>

<!-- taskbar strip -->
<div class="a" style="left:0;top:1029px;width:1920px;height:10px;background:#161616"></div>
<div class="a" style="left:1914px;top:1029px;width:1px;height:10px;background:#cfcfcf"></div>
<div class="a" style="left:250px;top:1030px;width:60px;height:9px;background:#222222"></div>
<div class="a" style="left:1851px;top:1037px;width:3px;height:2px;background:#e0e0e0"></div>
<div class="a" style="left:1862px;top:1037px;width:3px;height:2px;background:#e0e0e0"></div>
<div class="a" style="left:1872px;top:1037px;width:5px;height:2px;background:#e0e0e0"></div>
<div class="a" style="left:1880px;top:1037px;width:5px;height:2px;background:#e0e0e0"></div>
</body></html>
